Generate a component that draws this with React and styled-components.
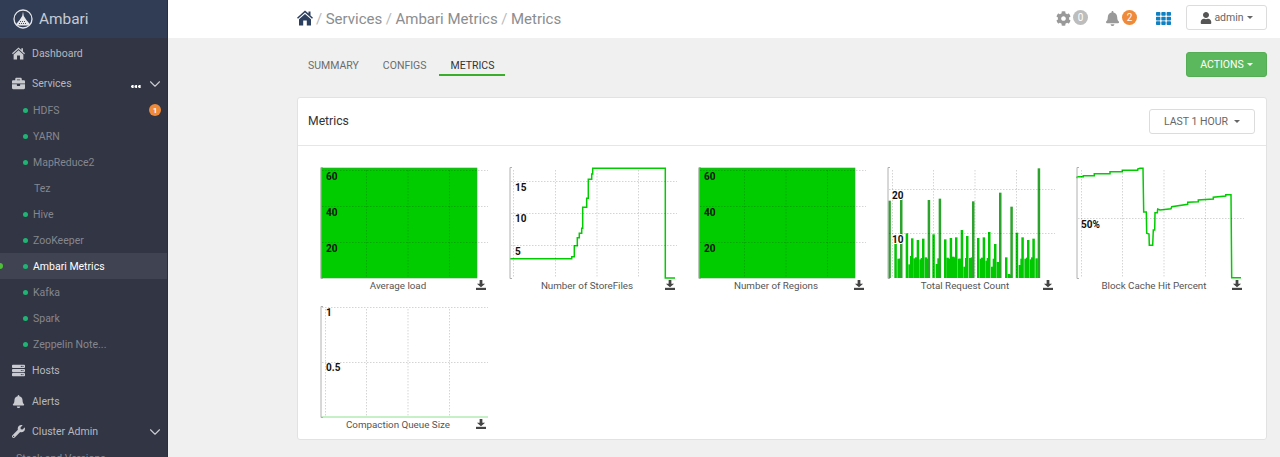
import React from 'react';
import styled, { createGlobalStyle } from 'styled-components';
import { FaBriefcase, FaBell, FaWrench, FaCog, FaUser, FaServer, FaTh } from 'react-icons/fa';
import { ChevronDown } from 'lucide-react';

const Global = createGlobalStyle`
  html, body { margin: 0; height: 100%; overflow: hidden; }
  body { font-family: Roboto, "Liberation Sans", sans-serif; background: #f0f0f0; }
  * { box-sizing: border-box; }
`;

const Page = styled.div`
  display: flex;
  width: 1280px;
  height: 457px;
  overflow: hidden;
`;

const Side = styled.aside`
  width: 168px;
  flex: none;
  background: #323544;
  border-right: 1px solid #2b2e3b;
  overflow: hidden;
`;

const Brand = styled.div`
  height: 38px;
  background: #313d54;
  display: flex;
  align-items: center;
  gap: 6px;
  padding-left: 13px;
  color: #c6cad2;
  font-size: 15.4px;
`;

const NavItem = styled.div`
  height: 30px;
  margin-top: ${p => p.$gap || 0}px;
  display: flex;
  align-items: center;
  padding-left: 12px;
  color: #b6b8bf;
  font-size: 10.5px;
  position: relative;
  svg.lead { width: 13px; height: 13px; margin-right: 7px; color: #c9cbd0; }
`;

const Chevron = styled(ChevronDown)`
  position: absolute;
  left: 146px;
  top: 7px;
  width: 18px;
  height: 18px;
  stroke-width: 1.5;
  color: #c9cbd0;
`;

const Dots = styled.span`
  position: absolute;
  left: 131px;
  top: 17px;
  width: 10px;
  height: 3px;
  background: radial-gradient(circle at 1.5px 1.5px, #fff 1.4px, transparent 1.5px) 0 0 / 3.5px 3px repeat-x;
`;

const SubList = styled.div`
  margin-top: -1px;
  margin-bottom: -2px;
`;

const SubItem = styled.div`
  height: 26px;
  display: flex;
  align-items: center;
  padding-left: ${p => (p.$plain ? 34 : 23)}px;
  gap: 5px;
  font-size: 10.5px;
  color: ${p => (p.$active ? '#fff' : '#85878f')};
  background: ${p => (p.$active ? '#404351' : 'transparent')};
  position: relative;
  &::before {
    content: '';
    display: ${p => (p.$plain ? 'none' : 'block')};
    width: 5px;
    height: 5px;
    border-radius: 50%;
    background: #1fb574;
  }
`;

const ActiveMark = styled.span`
  position: absolute;
  left: -3px;
  top: 10px;
  width: 6px;
  height: 6px;
  border-radius: 50%;
  background: #4fbf3a;
`;

const SideBadge = styled.span`
  position: absolute;
  left: 149px;
  top: 7px;
  width: 12px;
  height: 12px;
  border-radius: 50%;
  background: #ee8a39;
  color: #fff;
  font-size: 8px;
  font-weight: 700;
  display: flex;
  align-items: center;
  justify-content: center;
`;

const StackLink = styled.div`
  margin-top: 6px;
  padding-left: 16px;
  font-size: 10.5px;
  line-height: 14px;
  color: #85878f;
`;

const Main = styled.main`
  flex: 1;
  min-width: 0;
  display: flex;
  flex-direction: column;
`;

const TopBar = styled.header`
  height: 38px;
  flex: none;
  background: #fff;
  display: flex;
  align-items: center;
  padding: 0 13px 3px 129px;
`;

const Crumbs = styled.div`
  display: flex;
  align-items: center;
  gap: 3.5px;
  flex: 1;
  font-size: 15px;
  color: #8b8d90;
  padding-top: 3px;
  span.sep { color: #b9bbbd; }
  svg { margin-right: -0.5px; margin-top: -2px; }
`;

const Status = styled.div`
  display: flex;
  align-items: center;
  gap: 2px;
  margin-right: ${p => p.$space}px;
  padding-top: 1px;
  svg { width: 15px; height: 15px; color: ${p => p.$tint || '#999'}; }
`;

const Count = styled.span`
  width: 15px;
  height: 15px;
  border-radius: 50%;
  margin-top: -1px;
  background: ${p => p.$color};
  color: #fff;
  font-size: 10px;
  display: flex;
  align-items: center;
  justify-content: center;
`;

const Caret = styled.span`
  display: inline-block;
  width: 0;
  height: 0;
  margin-left: ${p => p.$gap || 3}px;
  border-left: 3px solid transparent;
  border-right: 3px solid transparent;
  border-top: 3px solid currentColor;
  vertical-align: middle;
`;

const Button = styled.div`
  width: ${p => p.$w}px;
  height: 25px;
  flex: none;
  display: flex;
  align-items: center;
  justify-content: center;
  border-radius: 3px;
  font-size: 10.5px;
  background: ${p => (p.$green ? '#5cb85c' : '#fff')};
  color: ${p => (p.$green ? '#fff' : '#666')};
  border: ${p => (p.$green ? '1px solid #55ad55' : '1px solid #dcdcdc')};
`;

const UserBtn = styled(Button)`
  svg { width: 12px; height: 12px; margin-right: 2px; color: #555; }
`;

const Content = styled.div`
  flex: 1;
  padding: 14px 13px 0 129px;
`;

const TabRow = styled.div`
  display: flex;
  justify-content: space-between;
  align-items: flex-start;
  height: 45px;
`;

const Tabs = styled.nav`
  display: flex;
  gap: 2px;
  height: 24px;
`;

const Tab = styled.div`
  padding: 0 11px;
  font-size: 10.5px;
  line-height: 27px;
  color: ${p => (p.$active ? '#333' : '#6c6c6c')};
  border-bottom: 2px solid ${p => (p.$active ? '#3aae2b' : 'transparent')};
`;

const Panel = styled.section`
  background: #fff;
  border: 1px solid #e2e2e2;
  border-radius: 3px;
  height: 343px;
`;

const PanelHead = styled.div`
  height: 48px;
  display: flex;
  align-items: center;
  justify-content: space-between;
  padding: 0 11px 1px 10px;
  border-bottom: 1px solid #e6e6e6;
  color: #333;
  font-size: 12.2px;
`;

const ChartGrid = styled.div`
  display: grid;
  grid-template-columns: repeat(5, 189px);
  grid-auto-rows: 139px;
  padding: 21px 0 0 22px;
`;

const ChartCell = styled.figure`
  margin: 0;
  width: 168px;
  position: relative;
  svg.plot { display: block; }
`;

const ChartTitle = styled.figcaption`
  font-size: 9.8px;
  line-height: 12px;
  margin-top: 1px;
  color: #555;
  text-align: center;
  padding-right: 12px;
`;

const SaveIcon = styled.svg`
  position: absolute;
  right: 2px;
  top: 113px;
  width: 10px;
  height: 10px;
  color: #444;
`;

const Label = styled.text`
  font-family: Roboto, "Liberation Sans", sans-serif;
  font-size: 10px;
  font-weight: 700;
  fill: #111;
  paint-order: stroke;
  stroke: ${p => (p.$halo ? '#fff' : 'none')};
  stroke-width: 2px;
`;

const HomeGlyph = ({ size = 16, color = '#2c3f5f' }) => (
  <svg width={size} height={size} viewBox="0 0 16 16">
    <path d="M8 0.5 L11.5 3.6 V1.5 H13.5 V5.4 L16 7.8 L15 8.8 L8 2.6 L1 8.8 L0 7.8 Z" fill={color} />
    <path d="M8 4 L14 9.2 V15.5 H9.8 V10.5 H6.2 V15.5 H2 V9.2 Z" fill={color} />
  </svg>
);

const LeadHome = styled.span`
  display: flex;
  margin-right: 7px;
`;

const Logo = () => (
  <svg width="20" height="20" viewBox="0 0 20 20">
    <circle cx="10" cy="10" r="9" fill="none" stroke="#e4e6ea" strokeWidth="1.3" />
    <path d="M10 2.5 L10.8 7 L13.4 11 L17 15.2 L16 16.4 H4 L3 15.2 L6.6 11 L9.2 7 Z" fill="#e4e6ea" />
    <path d="M7 12.5 h6 M6 14.5 h8" stroke="#313d54" strokeWidth="0.9" strokeDasharray="1 1" />
  </svg>
);

const Save = () => (
  <SaveIcon viewBox="0 0 11 11">
    <path d="M4 0 H7 V4 H10 L5.5 8 L1 4 H4 Z" fill="currentColor" />
    <rect x="0" y="8.6" width="11" height="2.4" fill="currentColor" />
  </SaveIcon>
);

const bars = [
  [25, 122], [43, 240], [52, 296], [57, 296], [60, 115], [77, 220], [85, 313], [90, 288], [93, 235], [100, 295],
  [105, 292], [110, 240], [118, 298], [122, 294], [126, 236], [134, 292], [140, 296], [143, 120], [157, 223],
  [167, 312], [172, 295], [176, 116], [192, 238], [199, 293], [204, 296], [209, 234], [216, 290], [221, 292],
  [225, 232], [233, 296], [238, 296], [242, 210], [250, 320], [255, 294], [258, 228], [267, 294], [272, 292],
  [276, 124], [291, 234], [299, 296], [303, 293], [308, 232], [316, 302], [320, 294], [324, 216], [333, 320],
  [338, 296], [342, 252], [350, 306], [357, 98], [375, 292], [383, 342], [388, 344], [391, 140], [407, 218],
  [416, 315], [421, 296], [424, 232], [433, 296], [438, 293], [441, 240], [449, 298], [453, 292], [457, 236],
  [466, 295], [473, 25],
];

const toPath = (pts, ox, oy) =>
  pts.map(([x, y], i) => `${i ? 'L' : 'M'}${(x / 3 - ox).toFixed(1)} ${(y / 3 - oy).toFixed(1)}`).join(' ');

// points read off the reference at 3x zoom
const filesLine = toPath([
  [600, 296], [785, 296], [785, 290], [793, 290], [793, 257], [802, 257], [802, 233], [808, 233], [808, 220],
  [815, 220], [815, 205], [818, 205], [818, 142], [830, 142], [830, 115], [835, 115], [835, 58], [845, 58],
  [845, 42], [848, 42], [848, 25], [1066, 25], [1066, 354], [1095, 354],
], 199, 7);

const cacheLine = toPath([
  [35, 55], [37, 50], [55, 50], [55, 47], [88, 47], [88, 41], [135, 41], [135, 35], [172, 35], [172, 31],
  [218, 31], [218, 27], [225, 25], [234, 25], [236, 156], [244, 156], [245, 220], [252, 222], [253, 256],
  [263, 256], [265, 210], [269, 210], [270, 158], [277, 158], [278, 147], [285, 150], [318, 146], [320, 140],
  [368, 133], [368, 127], [400, 125], [400, 120], [445, 117], [445, 112], [482, 108], [482, 104], [498, 104],
  [500, 353], [528, 353],
], 11, 7);

const Chart = ({ title, hs, vs = [46.5, 88, 129.5], edge = 5.5, labels, h = 112, children, halo }) => (
  <ChartCell>
    <svg className="plot" width="168" height={h} viewBox={`0 0 168 ${h}`}>
      {children}
      <g stroke="rgba(0,0,0,.17)" strokeDasharray="1.5 1.5" strokeWidth="1">
        {hs.map(y => <line key={y} x1="2" x2="168" y1={y + 0.5} y2={y + 0.5} />)}
        {vs.map(x => <line key={x} x1={x} x2={x} y1="3" y2={h - 1} />)}
        {edge && <line x1={edge} x2={edge} y1="3" y2={h - 1} />}
      </g>
      <path d={`M3 0.5 H1 V${h - 0.5} H3`} fill="none" stroke="#b0b0b0" strokeWidth="1" />
      {labels.map(([t, x, y]) => <Label key={t} x={x} y={y} $halo={halo}>{t}</Label>)}
    </svg>
    <ChartTitle>{title}</ChartTitle>
    <Save />
  </ChartCell>
);

const Solid = () => <rect x="1" y="1" width="156" height="110" fill="#00cc00" stroke="#3fa53f" strokeWidth="0.6" />;
const loadLabels = [['60', 6, 12.5], ['40', 6, 48.5], ['20', 6, 84.5]];

const services = [
  { name: 'HDFS', badge: 1 }, { name: 'YARN' }, { name: 'MapReduce2' }, { name: 'Tez', plain: true },
  { name: 'Hive' }, { name: 'ZooKeeper' }, { name: 'Ambari Metrics', active: true }, { name: 'Kafka' },
  { name: 'Spark' }, { name: 'Zeppelin Note...' },
];

const App = () => (
  <Page>
    <Global />
    <Side>
      <Brand><Logo />Ambari</Brand>
      <NavItem><LeadHome><HomeGlyph size={13} color="#c9cbd0" /></LeadHome>Dashboard</NavItem>
      <NavItem><FaBriefcase className="lead" />Services<Dots /><Chevron /></NavItem>
      <SubList>
        {services.map(s => (
          <SubItem key={s.name} $plain={s.plain} $active={s.active}>
            {s.active && <ActiveMark />}
            {s.name}
            {s.badge && <SideBadge>{s.badge}</SideBadge>}
          </SubItem>
        ))}
      </SubList>
      <NavItem><FaServer className="lead" />Hosts</NavItem>
      <NavItem $gap={1}><FaBell className="lead" />Alerts</NavItem>
      <NavItem><FaWrench className="lead" />Cluster Admin<Chevron /></NavItem>
      <StackLink>Stack and Versions</StackLink>
    </Side>
    <Main>
      <TopBar>
        <Crumbs>
          <HomeGlyph /><span className="sep">/</span><span>Services</span><span className="sep">/</span>
          <span>Ambari Metrics</span><span className="sep">/</span><span>Metrics</span>
        </Crumbs>
        <Status $space={17}><FaCog /><Count $color="#bdbdbd">0</Count></Status>
        <Status $space={19}><FaBell /><Count $color="#ee8a39">2</Count></Status>
        <Status $space={15} $tint="#0f80c1"><FaTh /></Status>
        <UserBtn $w={81}><FaUser />admin<Caret /></UserBtn>
      </TopBar>
      <Content>
        <TabRow>
          <Tabs>
            <Tab>SUMMARY</Tab>
            <Tab>CONFIGS</Tab>
            <Tab $active>METRICS</Tab>
          </Tabs>
          <Button $green $w={81}>ACTIONS<Caret /></Button>
        </TabRow>
        <Panel>
          <PanelHead>
            Metrics
            <Button $w={106}>LAST 1 HOUR<Caret $gap={6} /></Button>
          </PanelHead>
          <ChartGrid>
            <Chart title="Average load" hs={[3, 39, 75]} edge={0} labels={loadLabels}><Solid /></Chart>
            <Chart title="Number of StoreFiles" hs={[14, 46, 78]} edge={4.5}
              labels={[['15', 6, 24], ['10', 6, 55], ['5', 6, 88]]}>
              <path d={filesLine} fill="none" stroke="#00cc00" strokeWidth="1.5" />
            </Chart>
            <Chart title="Number of Regions" hs={[3, 39, 75]} edge={0} labels={loadLabels}><Solid /></Chart>
            <Chart title="Total Request Count" hs={[22, 66]} labels={[['20', 5, 32], ['10', 5, 76]]} halo>
              {bars.map(([x, y]) => (
                <rect key={x} x={x / 3 - 7} y={y / 3 - 7} width="2.5" height={111 - (y / 3 - 7)}
                  fill={y < 200 ? '#2ca32c' : '#00c800'} />
              ))}
            </Chart>
            <Chart title="Block Cache Hit Percent" hs={[51]} labels={[['50%', 5, 61]]}>
              <path d={cacheLine} fill="none" stroke="#00cc00" strokeWidth="1.5" />
            </Chart>
            <Chart title="Compaction Queue Size" hs={[1, 56]} labels={[['1', 6, 10], ['0.5', 6, 65]]}>
              <line x1="1" x2="168" y1="111" y2="111" stroke="#90e090" strokeWidth="1" />
            </Chart>
          </ChartGrid>
        </Panel>
      </Content>
    </Main>
  </Page>
);

export default App;
